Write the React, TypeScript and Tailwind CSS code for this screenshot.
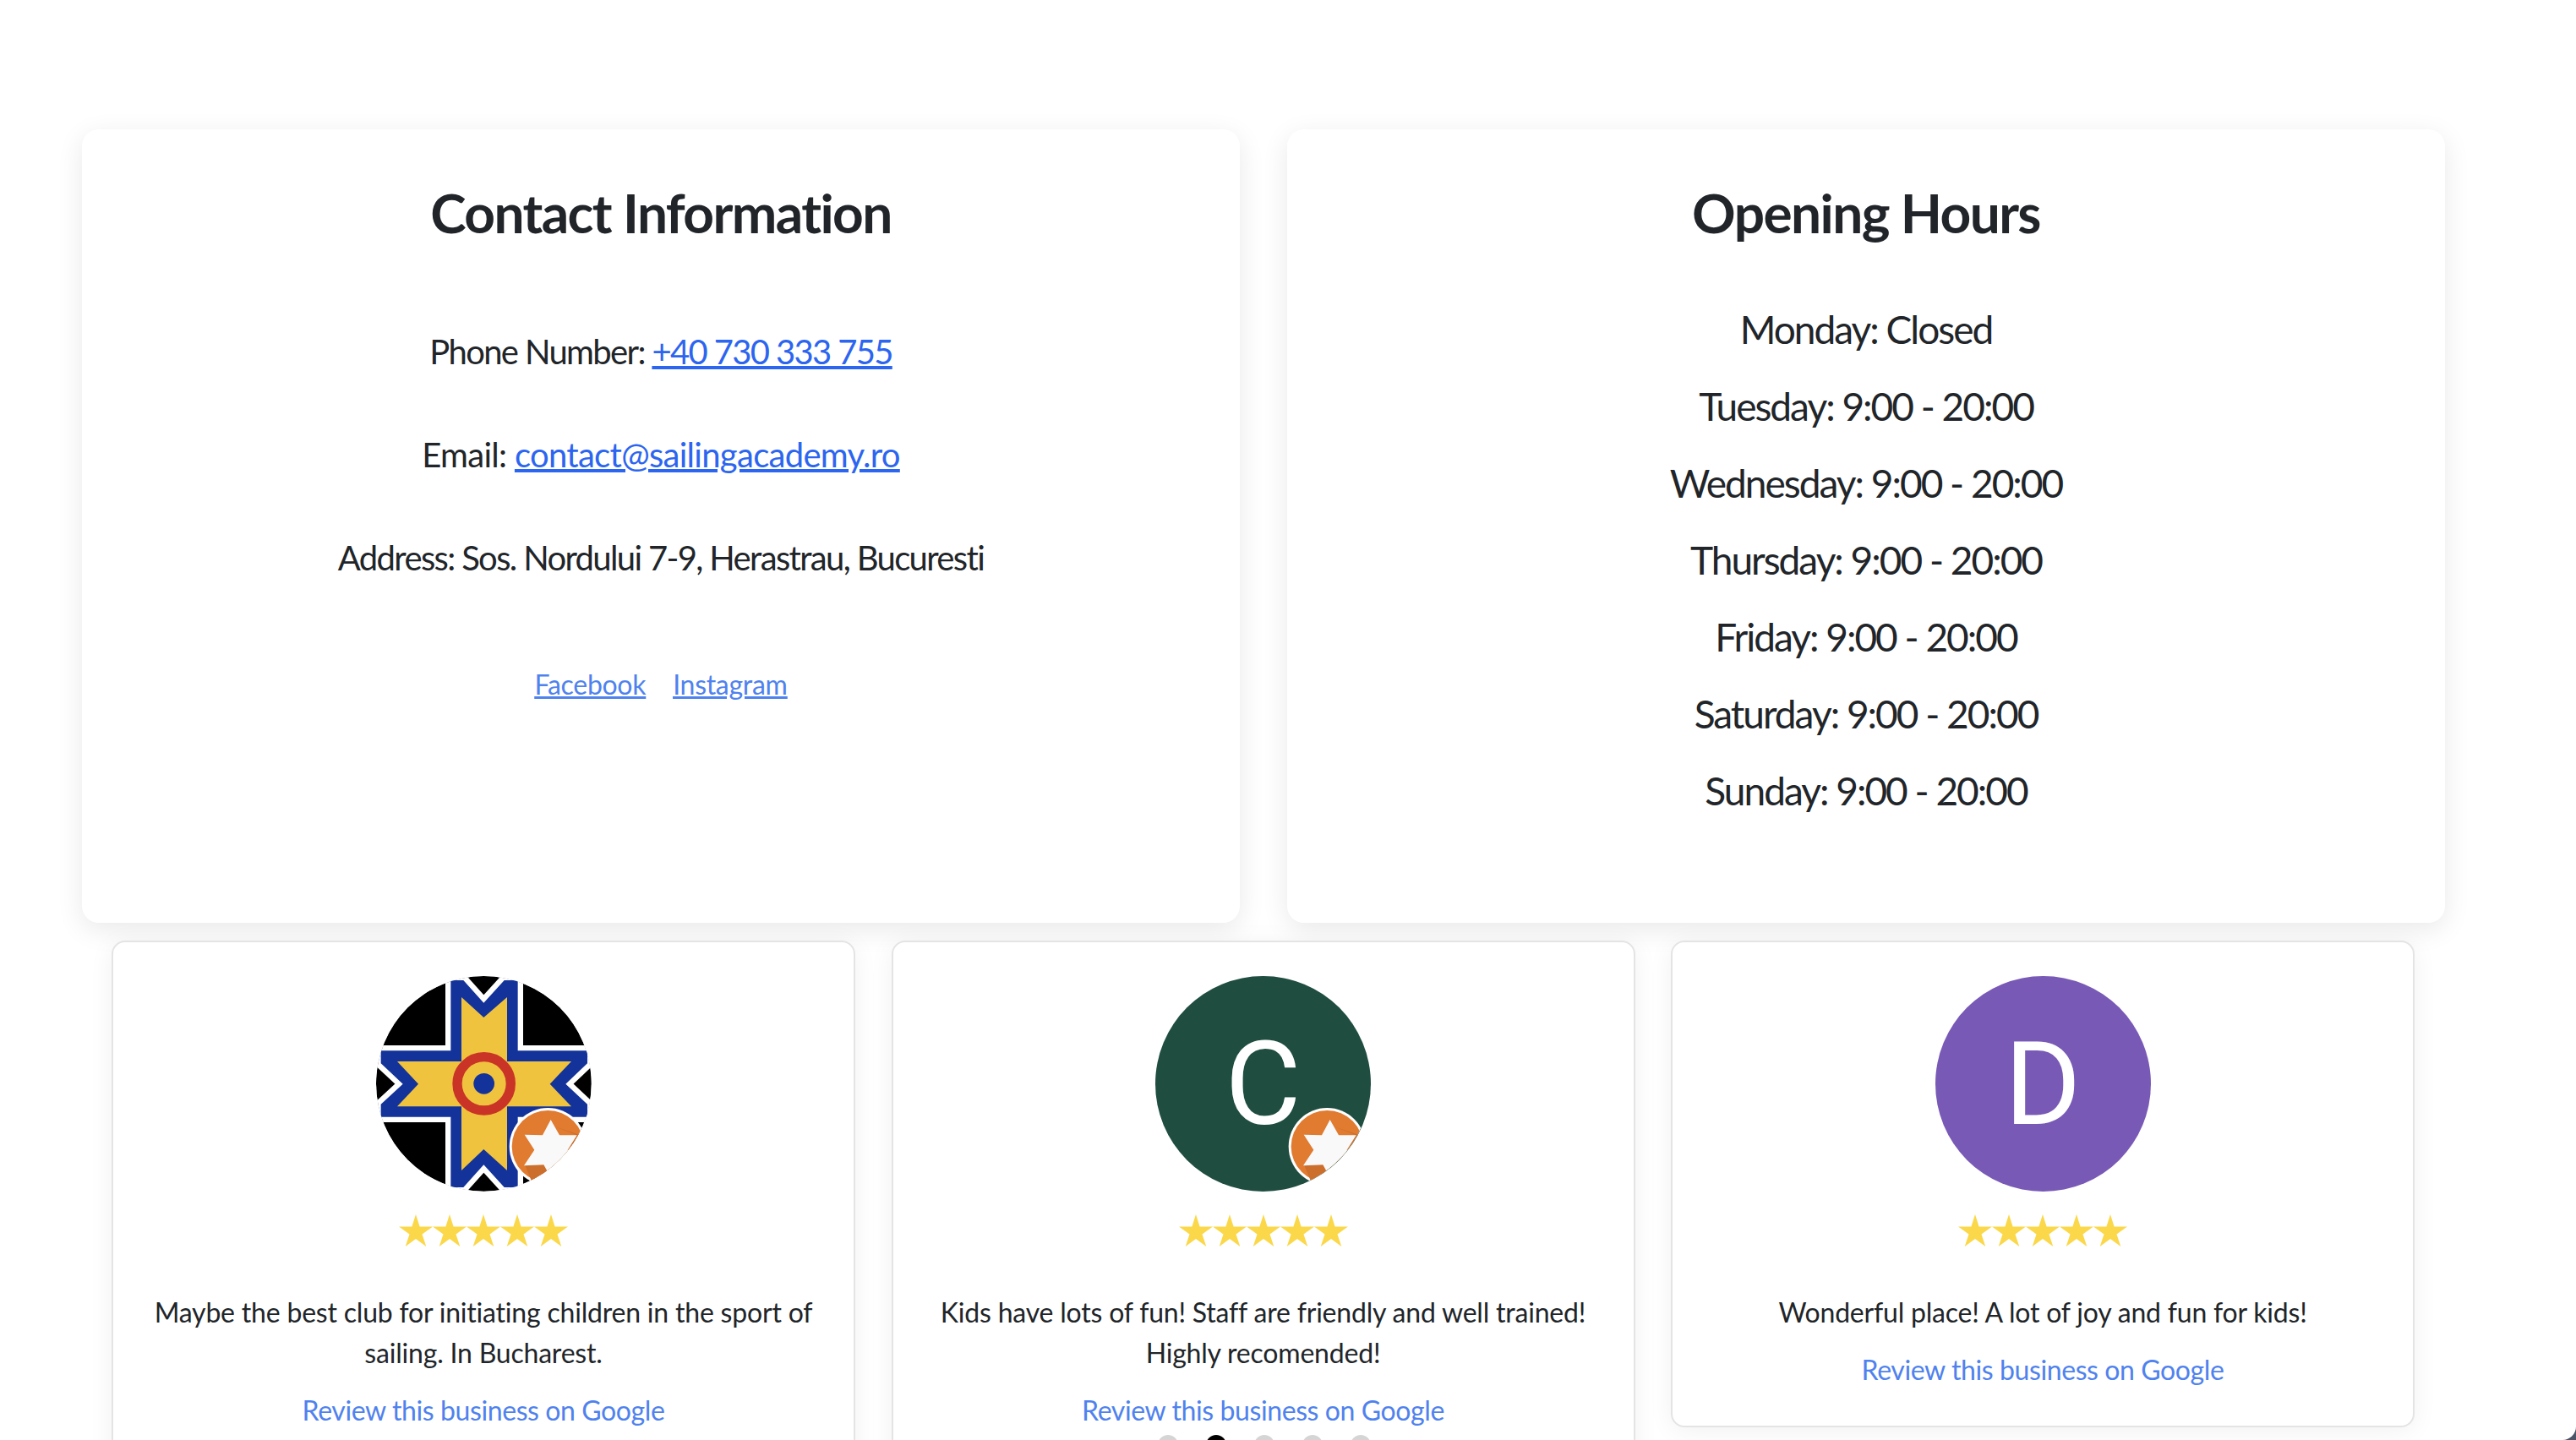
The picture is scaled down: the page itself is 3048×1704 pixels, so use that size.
import React from 'react';

const hours = [
  'Monday: Closed',
  'Tuesday: 9:00 - 20:00',
  'Wednesday: 9:00 - 20:00',
  'Thursday: 9:00 - 20:00',
  'Friday: 9:00 - 20:00',
  'Saturday: 9:00 - 20:00',
  'Sunday: 9:00 - 20:00',
];

// Coordinates are in a 765 unit box, same one for logo and badge
function Badge({ id }: { id: string }) {
  return (
    <svg viewBox="135 75 765 765" className="absolute inset-0 w-full h-full">
      <defs>
        <clipPath id={id}>
          <circle cx="517" cy="457" r="382" />
        </clipPath>
      </defs>
      <g clipPath={`url(#${id})`}>
        <circle cx="745" cy="680" r="137" fill="#ffffff" />
        <circle cx="745" cy="680" r="128" fill="#e07b30" />
        <polygon points="664,748 730,745 790,860 690,810" fill="#cc6e2c" />
        <polygon points="770,610 848,640 815,692 860,640" fill="#cc6e2c" />
        <polygon
          points="755,585 786,640 848,640 815,692 838,750 781,735 755,790 730,745 660,748 697,692 662,638 726,640"
          fill="#f9f9f9"
        />
      </g>
    </svg>
  );
}

function LogoAvatar() {
  const outer =
    '400,90 445,90 517,170 590,90 638,90 638,340 885,340 885,385 808,458 885,530 885,575 638,575 638,825 590,825 517,745 445,825 400,825 400,575 152,575 152,530 230,458 152,385 152,340 400,340';
  const inner =
    '438,150 517,222 600,150 600,378 828,378 752,458 828,538 600,538 600,765 517,690 438,765 438,538 210,538 285,458 210,378 438,378';
  return (
    <div className="relative w-[255px] h-[255px] rounded-full overflow-hidden">
      <svg viewBox="135 75 765 765" className="w-full h-full">
        <circle cx="517" cy="457" r="382" fill="#000000" />
        <polygon points={outer} fill="#ffffff" stroke="#ffffff" strokeWidth="38" strokeLinejoin="miter" />
        <polygon points={outer} fill="#13339b" />
        <polygon points={inner} fill="#f0c33f" />
        <circle cx="518" cy="457" r="95" fill="#f0c33f" stroke="#c93427" strokeWidth="34" />
        <circle cx="518" cy="457" r="37" fill="#13339b" />
      </svg>
      <Badge id="badge-a" />
    </div>
  );
}

function LetterAvatar({ letter, color, badge }: { letter: string; color: string; badge?: boolean }) {
  return (
    <div
      className={`relative w-[255px] h-[255px] rounded-full overflow-hidden flex items-center justify-center ${color}`}
    >
      <span className="font-['Roboto',sans-serif] text-[138px] leading-none text-white">{letter}</span>
      {badge && <Badge id="badge-c" />}
    </div>
  );
}

function Stars() {
  return (
    <div className="flex justify-center mt-[27px]">
      {[0, 1, 2, 3, 4].map((i) => (
        <svg key={i} viewBox="0 0 40 38" className="w-[40px] h-[38px]">
          <polygon points="20,0 24.6,14.5 40,14.5 27.5,23.5 32.3,38 20,29 7.7,38 12.5,23.5 0,14.5 15.4,14.5" fill="#fbd84a" />
        </svg>
      ))}
    </div>
  );
}

function ReviewCard({ avatar, text }: { avatar: React.ReactNode; text: React.ReactNode }) {
  return (
    <div className="bg-white border-2 border-[#e4e4e4] rounded-[16px] pt-[40px] pb-[42px] px-[40px] text-center shadow-[0_4px_30px_rgba(0,0,0,0.06)]">
      <div className="flex justify-center">{avatar}</div>
      <Stars />
      <p className="mt-[54px] text-[32px] leading-[48px] tracking-[-0.2px] text-[#212529]">{text}</p>
      <a href="#" className="block mt-[20px] text-[32px] leading-[48px] tracking-[-0.4px] text-[#4f82ee]">
        Review this business on Google
      </a>
    </div>
  );
}

export default function App() {
  return (
    <div className="relative h-screen overflow-hidden bg-[#4a5568] font-['Lato',sans-serif]">
      <div className="h-full bg-white rounded-br-[16px] overflow-hidden">
        <div className="pt-[153px] pl-[97px] w-[2893px]">
          {/* Contact and hours */}
          <div className="grid grid-cols-2 gap-[56px] h-[939px]">
            <div className="bg-white rounded-[20px] text-center shadow-[0_8px_32px_rgba(0,0,0,0.09)] pt-[60px]">
              <h2 className="text-[64px] leading-[77px] font-bold tracking-[-1.6px] text-[#212529]">Contact Information</h2>
              <div className="mt-[96px] text-[40px] leading-[60px] tracking-[-1.65px] text-[#212529]">
                <p>
                  Phone Number:{' '}
                  <a href="#" className="text-[#2c65f0] underline">
                    +40 730 333 755
                  </a>
                </p>
                <p className="mt-[62px] tracking-[-0.7px]">
                  Email:{' '}
                  <a href="#" className="text-[#2c65f0] underline">
                    contact@sailingacademy.ro
                  </a>
                </p>
                <p className="mt-[62px]">Address: Sos. Nordului 7-9, Herastrau, Bucuresti</p>
              </div>
              <div className="mt-[90px] flex justify-center gap-[32px] text-[32px] leading-[60px] tracking-[-0.3px] text-[#4f82ee] underline">
                <a href="#">Facebook</a>
                <a href="#">Instagram</a>
              </div>
            </div>

            <div className="bg-white rounded-[20px] text-center shadow-[0_8px_32px_rgba(0,0,0,0.09)] pt-[60px]">
              <h2 className="text-[64px] leading-[77px] font-bold tracking-[-1.6px] text-[#212529]">Opening Hours</h2>
              <div className="mt-[54px] text-[46px] leading-[91px] tracking-[-2px] text-[#212529]">
                {hours.map((h) => (
                  <p key={h}>{h}</p>
                ))}
              </div>
            </div>
          </div>

          {/* Reviews */}
          <div className="relative grid grid-cols-3 gap-[42.5px] items-start w-[2725px] ml-[35px] mt-[21px]">
            <ReviewCard
              avatar={<LogoAvatar />}
              text="Maybe the best club for initiating children in the sport of sailing. In Bucharest."
            />
            <ReviewCard
              avatar={<LetterAvatar letter="C" color="bg-[#1f4d40]" badge />}
              text="Kids have lots of fun! Staff are friendly and well trained! Highly recomended!"
            />
            <ReviewCard
              avatar={<LetterAvatar letter="D" color="bg-[#7859b6]" />}
              text="Wonderful place! A lot of joy and fun for kids!"
            />
            <div className="absolute left-[1238px] top-[585px] flex gap-[33px]">
              {[0, 1, 2, 3, 4].map((i) => (
                <span
                  key={i}
                  className={i === 1 ? 'w-[24px] h-[24px] rounded-full bg-black' : 'w-[24px] h-[24px] rounded-full bg-[#d5d5d5]'}
                />
              ))}
            </div>
          </div>
        </div>
      </div>
    </div>
  );
}
